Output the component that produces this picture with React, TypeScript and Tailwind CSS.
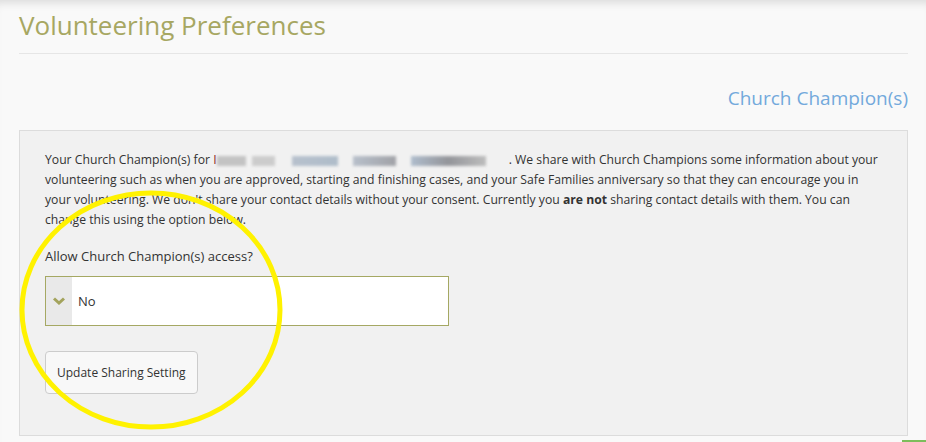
import React from 'react'

function Chevron() {
  return (
    <svg width="12" height="8" viewBox="0 0 12 8" className="block">
      <path d="M1 1.5 L6 6 L11 1.5" fill="none" stroke="#a3a35c" strokeWidth="3" strokeLinejoin="miter" />
    </svg>
  )
}

export default function App() {
  return (
    <div
      className="relative w-[926px] h-[442px] overflow-hidden bg-[#f9f9f9] text-[#333] shadow-[inset_0_9px_8px_-6px_rgba(0,0,0,0.12)]"
      style={{ fontFamily: '"Open Sans", "Liberation Sans", sans-serif' }}
    >
      <div className="px-[19px] pr-[18px]">
        {/* page header */}
        <h1 className="pt-[5px] pb-[8px] text-[26px] leading-[40px] text-[#a7a762] border-b border-[#e6e6e6]">
          Volunteering Preferences
        </h1>

        <h2 className="pt-[31px] pb-[19px] text-right text-[19px] leading-[26px] text-[#73a9dc]">
          Church Champion(s)
        </h2>

        {/* sharing panel */}
        <section className="h-[306px] border border-[#dcdcdc] bg-[#f1f1f1] px-[25px] pt-[19px]">
          <p className="text-[12.2px] leading-[20px]">
            Your Church Champion(s) for{' '}
            <span className="text-[#8b1a1a]">I</span>
            <span className="inline-block align-middle w-[289px] h-[10px] blur-[1.6px] opacity-80 bg-[linear-gradient(90deg,#b8b8b8_0,#b8b8b8_10%,transparent_10%,transparent_12%,#c4c4c4_12%,#c4c4c4_20%,transparent_20%,transparent_26%,#a9b5c4_26%,#9fb0c0_42%,transparent_42%,transparent_47%,#aab4c2_47%,#8d8f95_62%,transparent_62%,transparent_67%,#9fb0c4_67%,#7d7f85_80%,#b0b0b0_93%,transparent_93%)]" />
            {' '}. We share with Church Champions some information about your volunteering such as when you are
            approved, starting and finishing cases, and your Safe Families anniversary so that they can encourage you
            in your volunteering. We don't share your contact details without your consent. Currently you{' '}
            <b className="font-bold">are not</b> sharing contact details with them. You can change this using the option
            below.
          </p>

          <div className="mt-[16px] text-[13px] leading-[20px]">Allow Church Champion(s) access?</div>

          <div className="mt-[10px] flex w-[404px] h-[50px] border border-[#a5a863] bg-white">
            <div className="flex w-[26px] items-center justify-center bg-[#e9e9e9]">
              <Chevron />
            </div>
            <div className="flex items-center pl-[6px] pt-[2px] text-[13px]">No</div>
          </div>

          <button className="mt-[25px] h-[43px] rounded-[4px] border border-[#cccccc] bg-[#f8f8f8] px-[11px] text-[12px] text-[#333]">
            Update Sharing Setting
          </button>
        </section>
      </div>

      {/* hand-drawn highlight */}
      <svg className="absolute left-0 top-0 pointer-events-none" width="926" height="442">
        <ellipse cx="151" cy="310" rx="129" ry="117" fill="none" stroke="#fff200" strokeWidth="5" />
      </svg>

      <div className="absolute right-0 bottom-0 w-[24px] h-[2px] bg-[#7dbd5b]" />
    </div>
  )
}
